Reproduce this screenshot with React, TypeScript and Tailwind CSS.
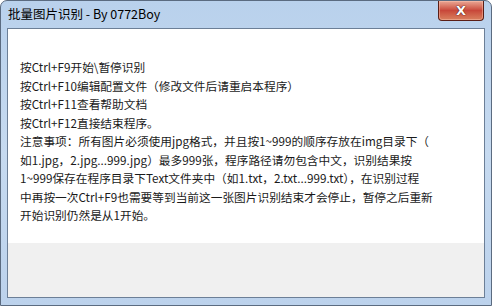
import React from 'react'

const lines = [
  '按Ctrl+F9开始\\暂停识别',
  '按Ctrl+F10编辑配置文件（修改文件后请重启本程序）',
  '按Ctrl+F11查看帮助文档',
  '按Ctrl+F12直接结束程序。',
  '注意事项：所有图片必须使用jpg格式，并且按1~999的顺序存放在img目录下（',
  '如1.jpg，2.jpg...999.jpg）最多999张，程序路径请勿包含中文，识别结果按',
  '1~999保存在程序目录下Text文件夹中（如1.txt，2.txt...999.txt），在识别过程',
  '中再按一次Ctrl+F9也需要等到当前这一张图片识别结束才会停止，暂停之后重新',
  '开始识别仍然是从1开始。',
]

function CloseButton() {
  return (
    <div className="absolute top-0 right-[7px] w-[46px] h-[20px] rounded-b-[4px] border border-t-0 border-[#5a1e16] bg-gradient-to-b from-[#e9a795] via-[#c8473a] to-[#d9805f] flex items-center justify-center shadow-[inset_0_0_0_1px_rgba(255,200,180,0.45)]">
      <span
        className="text-white text-[13px] font-bold leading-none"
        style={{ fontFamily: '"DejaVu Sans", sans-serif', textShadow: '0 0 1px #3a0a05, 0 0 1px #3a0a05' }}
      >
        X
      </span>
    </div>
  )
}

export default function App() {
  return (
    <div className="w-[492px] h-[306px] bg-white">
      <div className="relative w-full h-full rounded-t-[7px] border border-[#5b6b80] bg-gradient-to-b from-[#b9d1ec] via-[#c6daf0] to-[#bcd2ec] flex flex-col px-[6px] pb-[7px]">
        {/* Title bar */}
        <div className="h-[27px] flex items-center pl-[1px]">
          <span
            className="text-[12.5px] text-black"
            style={{ fontFamily: '"Noto Sans CJK SC", "Noto Sans", sans-serif' }}
          >
            批量图片识别 - By 0772Boy
          </span>
        </div>
        <CloseButton />

        {/* Client area */}
        <div className="flex-1 flex flex-col border border-[#6c7f97] bg-white">
          <div
            className="flex-1 pl-[12px] pt-[29px] text-[11.7px] leading-[18.5px] text-[#1a1a1a]"
            style={{ fontFamily: '"Noto Sans CJK SC", sans-serif' }}
          >
            {lines.map((l, i) => (
              <div key={i} className="whitespace-nowrap">
                {l}
              </div>
            ))}
          </div>
          <div className="h-[54px] bg-[#f0f0f0]" />
        </div>
      </div>
    </div>
  )
}
